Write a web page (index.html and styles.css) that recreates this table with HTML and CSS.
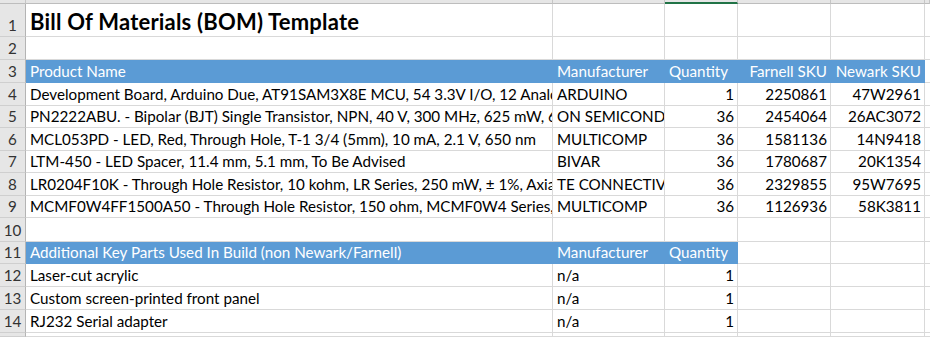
FILE: index.html
```html
<!DOCTYPE html>
<html>
<head>
<meta charset="utf-8">
<link rel="stylesheet" href="styles.css">
</head>
<body>
<div class="sheet">
  <div class="ch corner"></div><div class="ch"></div><div class="ch"></div><div class="ch sel"></div><div class="ch"></div><div class="ch"></div><div class="ch"></div>

  <div class="rh">1</div><div class="c title">Bill Of Materials (BOM) Template</div><div class="c"></div><div class="c"></div><div class="c"></div><div class="c"></div><div class="c"></div>

  <div class="rh">2</div><div class="c"></div><div class="c"></div><div class="c"></div><div class="c"></div><div class="c"></div><div class="c"></div>

  <div class="rh">3</div><div class="c hd">Product Name</div><div class="c hd">Manufacturer</div><div class="c hd">Quantity</div><div class="c hd r">Farnell SKU</div><div class="c hd r">Newark SKU</div><div class="c"></div>

  <div class="rh">4</div><div class="c">Development Board, Arduino Due, AT91SAM3X8E MCU, 54 3.3V I/O, 12 Analog Inputs</div><div class="c">ARDUINO</div><div class="c r">1</div><div class="c r">2250861</div><div class="c r">47W2961</div><div class="c"></div>

  <div class="rh">5</div><div class="c">PN2222ABU. - Bipolar (BJT) Single Transistor, NPN, 40 V, 300 MHz, 625 mW, 600 mA</div><div class="c">ON SEMICONDUCTOR</div><div class="c r">36</div><div class="c r">2454064</div><div class="c r">26AC3072</div><div class="c"></div>

  <div class="rh">6</div><div class="c">MCL053PD - LED, Red, Through Hole, T-1 3/4 (5mm), 10 mA, 2.1 V, 650 nm</div><div class="c">MULTICOMP</div><div class="c r">36</div><div class="c r">1581136</div><div class="c r">14N9418</div><div class="c"></div>

  <div class="rh">7</div><div class="c">LTM-450 - LED Spacer, 11.4 mm, 5.1 mm, To Be Advised</div><div class="c">BIVAR</div><div class="c r">36</div><div class="c r">1780687</div><div class="c r">20K1354</div><div class="c"></div>

  <div class="rh">8</div><div class="c">LR0204F10K - Through Hole Resistor, 10 kohm, LR Series, 250 mW, ± 1%, Axial Leaded</div><div class="c">TE CONNECTIVITY</div><div class="c r">36</div><div class="c r">2329855</div><div class="c r">95W7695</div><div class="c"></div>

  <div class="rh">9</div><div class="c">MCMF0W4FF1500A50 - Through Hole Resistor, 150 ohm, MCMF0W4 Series, 250 mW</div><div class="c">MULTICOMP</div><div class="c r">36</div><div class="c r">1126936</div><div class="c r">58K3811</div><div class="c"></div>

  <div class="rh">10</div><div class="c"></div><div class="c"></div><div class="c"></div><div class="c"></div><div class="c"></div><div class="c"></div>

  <div class="rh">11</div><div class="c hd">Additional Key Parts Used In Build (non Newark/Farnell)</div><div class="c hd">Manufacturer</div><div class="c hd">Quantity</div><div class="c"></div><div class="c"></div><div class="c"></div>

  <div class="rh">12</div><div class="c">Laser-cut acrylic</div><div class="c">n/a</div><div class="c r">1</div><div class="c"></div><div class="c"></div><div class="c"></div>

  <div class="rh">13</div><div class="c">Custom screen-printed front panel</div><div class="c">n/a</div><div class="c r">1</div><div class="c"></div><div class="c"></div><div class="c"></div>

  <div class="rh">14</div><div class="c">RJ232 Serial adapter</div><div class="c">n/a</div><div class="c r">1</div><div class="c"></div><div class="c"></div><div class="c"></div>

  <div class="rh"></div><div class="c"></div><div class="c"></div><div class="c"></div><div class="c"></div><div class="c"></div><div class="c"></div>
</div>
</body>
</html>
```

FILE: styles.css
```css
html, body {
  margin: 0;
  padding: 0;
  background: #ffffff;
  overflow: hidden;
}

.sheet {
  display: grid;
  grid-template-columns: 26px 527px 112px 73px 93px 94px 5px;
  grid-template-rows: 4px 33px 23px 23px 23px 22px 23px 22px 23px 22px 24px 22px 23px 23px 23px 4px;
  font-family: "Lato", "Liberation Sans", sans-serif;
  font-size: 15.2px;
  color: #000;
  width: 930px;
  height: 337px;
  overflow: hidden;
}

.ch {
  background: #e6e6e6;
  border-right: 1px solid #c6c6c6;
  border-bottom: 1px solid #bdbdbd;
  box-sizing: border-box;
}

.ch.sel {
  border-bottom: 2px solid #217346;
}

.rh {
  background: #e6e6e6;
  border-right: 1px solid #b4b4b4;
  border-bottom: 1px solid #cfcfcf;
  box-sizing: border-box;
  display: flex;
  align-items: flex-end;
  justify-content: center;
  padding-bottom: 2px;
  line-height: 18px;
  color: #333;
  overflow: hidden;
}

.c {
  border-right: 1px solid #d9d9d9;
  border-bottom: 1px solid #d9d9d9;
  box-sizing: border-box;
  overflow: hidden;
  white-space: nowrap;
  display: flex;
  align-items: flex-end;
  padding: 0 3px 2px 4px;
  line-height: 18px;
}

.c.r {
  justify-content: flex-end;
}

.c.hd {
  background: #5b9bd5;
  color: #ffffff;
  border-color: #5b9bd5;
}

.c.title {
  font-weight: 700;
  font-size: 22px;
  letter-spacing: 0.2px;
  line-height: 26px;
  padding-bottom: 1px;
}
```
